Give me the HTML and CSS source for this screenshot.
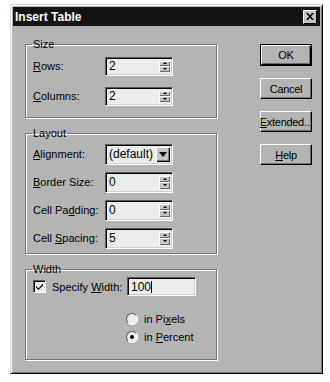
FILE: index.html
```html
<!DOCTYPE html>
<html lang="en">
<head>
  <meta charset="UTF-8">
  <title>Insert Table</title>
  <link rel="stylesheet" href="styles.css">
</head>
<body>

  <div class="window">
    <div class="titlebar">
      <span class="title">Insert Table</span>
      <span class="close">
        <svg width="8" height="7" viewBox="0 0 8 7"><path d="M0 0h2l2 2.5L6 0h2L5 3.5 8 7H6L4 4.5 2 7H0l3-3.5z" fill="#000"/></svg>
      </span>
    </div>

    <div class="body">
      <div class="groups">
        <fieldset class="group group-size">
          <legend>Size</legend>
          <div class="row">
            <label><u>R</u>ows:</label>
            <div class="field spin"><span class="value">2</span><span class="arrows"><i class="up"></i><i class="down"></i></span></div>
          </div>
          <div class="row">
            <label><u>C</u>olumns:</label>
            <div class="field spin"><span class="value">2</span><span class="arrows"><i class="up"></i><i class="down"></i></span></div>
          </div>
        </fieldset>

        <fieldset class="group group-layout">
          <legend>Layout</legend>
          <div class="row">
            <label><u>A</u>lignment:</label>
            <div class="field select"><span class="value">(default)</span><span class="drop"><i></i></span></div>
          </div>
          <div class="row">
            <label><u>B</u>order Size:</label>
            <div class="field spin"><span class="value">0</span><span class="arrows"><i class="up"></i><i class="down"></i></span></div>
          </div>
          <div class="row">
            <label>Cell Pa<u>d</u>ding:</label>
            <div class="field spin"><span class="value">0</span><span class="arrows"><i class="up"></i><i class="down"></i></span></div>
          </div>
          <div class="row">
            <label>Cell <u>S</u>pacing:</label>
            <div class="field spin"><span class="value">5</span><span class="arrows"><i class="up"></i><i class="down"></i></span></div>
          </div>
        </fieldset>

        <fieldset class="group group-width">
          <legend>Width</legend>
          <div class="check-row">
            <span class="checkbox">
              <svg width="9" height="9" viewBox="0 0 9 9"><path d="M1 4l2.5 2.5L8 1.5v2L3.5 8 1 5.5z" fill="#000"/></svg>
            </span>
            <span class="check-label">Specify <u>W</u>idth:</span>
            <div class="field text"><span class="value">100</span><span class="caret"></span></div>
          </div>
          <div class="radios">
            <div class="radio-row"><span class="radio"></span><span>in Pi<u>x</u>els</span></div>
            <div class="radio-row"><span class="radio checked"></span><span>in <u>P</u>ercent</span></div>
          </div>
        </fieldset>
      </div>

      <div class="buttons">
        <div class="btn default"><span>OK</span></div>
        <div class="btn"><span>Cancel</span></div>
        <div class="btn"><span><u>E</u>xtended...</span></div>
        <div class="btn"><span><u>H</u>elp</span></div>
      </div>
    </div>
  </div>

</body>
</html>
```

FILE: styles.css
```css
body {
  margin: 0;
  background: #fff;
  font-family: "Liberation Sans", Arial, sans-serif;
  font-size: 11px;
  color: #000;
}
.window {
  margin: 4px 0 0 10px;
  width: 313px;
  height: 370px;
  box-sizing: border-box;
  background: #b4b4b4;
  border: 1px solid;
  border-color: #d8d8d8 #000 #000 #d8d8d8;
  box-shadow: inset 1px 1px #fff, inset -1px -1px #7a7a7a;
  padding: 2px;
}
.titlebar {
  height: 19px;
  background: #141414;
  display: flex;
  align-items: center;
  justify-content: space-between;
  padding: 0 3px 0 2px;
}
.title {
  color: #fff;
  font-weight: bold;
  font-size: 12px;
}
.close {
  width: 14px;
  height: 14px;
  box-sizing: border-box;
  background: #c4c4c4;
  border: 1px solid;
  border-color: #fff #000 #000 #fff;
  display: flex;
  align-items: center;
  justify-content: center;
}
.body {
  display: flex;
  justify-content: space-between;
  padding: 12px 8px 0 12px;
}
.groups {
  width: 192px;
}
.group {
  margin: 0 0 9px;
  padding: 0 0 0 7px;
  border: 1px solid #777;
  box-shadow: inset 1px 1px #fff, 1px 1px #fff;
}
.group legend {
  padding: 0 1px;
  margin-left: -1px;
  line-height: 13px;
}
.group-size {
  padding-bottom: 6px;
}
.group-size .row {
  height: 30px;
}
.group-layout {
  padding-bottom: 1px;
}
.group-layout .row {
  height: 28px;
}
.group-layout .field {
  height: 21px;
}
.row {
  display: flex;
  align-items: center;
}
.row label {
  width: 72px;
}
.field {
  width: 68px;
  height: 19px;
  box-sizing: border-box;
  background: #ececec;
  border: 1px solid;
  border-color: #5a5a5a #fff #fff #5a5a5a;
  box-shadow: inset 1px 1px #000, inset -1px -1px #cfcfcf;
  display: flex;
  align-items: center;
  padding: 2px;
}
.value {
  flex: 1;
  padding-left: 1px;
  font-size: 12px;
}
.arrows {
  display: flex;
  flex-direction: column;
  width: 11px;
  align-self: stretch;
  margin: 1px 0;
}
.arrows i {
  flex: 1;
  background: #c4c4c4;
  box-shadow: inset 1px 1px #fff, inset -1px -1px #6a6a6a;
  display: flex;
  align-items: center;
  justify-content: center;
}
.arrows i::after {
  content: "";
  border-left: 2px solid transparent;
  border-right: 2px solid transparent;
}
.arrows .up::after {
  border-bottom: 2px solid #000;
}
.arrows .down::after {
  border-top: 2px solid #000;
}
.select .drop {
  width: 14px;
  align-self: stretch;
  background: #c4c4c4;
  box-shadow: inset 1px 1px #fff, inset -1px -1px #000, inset -2px -2px #7a7a7a;
  display: flex;
  align-items: center;
  justify-content: center;
}
.select .drop i {
  border-left: 4px solid transparent;
  border-right: 4px solid transparent;
  border-top: 5px solid #000;
}
.check-row {
  display: flex;
  align-items: center;
  margin-top: 1px;
}
.checkbox {
  width: 13px;
  height: 13px;
  box-sizing: border-box;
  background: #ececec;
  border: 1px solid;
  border-color: #5a5a5a #fff #fff #5a5a5a;
  box-shadow: inset 1px 1px #000;
  display: flex;
  align-items: center;
  justify-content: center;
  margin-right: 6px;
}
.check-label {
  width: 75px;
}
.text {
  width: 69px;
  justify-content: flex-start;
}
.text .value {
  flex: none;
}
.caret {
  width: 1px;
  height: 12px;
  background: #000;
}
.radios {
  padding: 14px 0 13px 93px;
}
.radio-row {
  display: flex;
  align-items: center;
  height: 18px;
}
.radio {
  width: 12px;
  height: 12px;
  box-sizing: border-box;
  border-radius: 50%;
  background: #ececec;
  border: 1px solid;
  border-color: #5a5a5a #fff #fff #5a5a5a;
  margin-right: 6px;
  display: flex;
  align-items: center;
  justify-content: center;
}
.radio.checked::after {
  content: "";
  width: 4px;
  height: 4px;
  border-radius: 50%;
  background: #000;
}
.buttons {
  display: flex;
  flex-direction: column;
  gap: 12px;
  padding-top: 6px;
}
.btn {
  width: 52px;
  height: 21px;
  box-sizing: border-box;
  background: #b4b4b4;
  border: 1px solid;
  border-color: #fff #000 #000 #fff;
  box-shadow: inset -1px -1px #6f6f6f;
  display: flex;
  align-items: center;
  justify-content: center;
  font-size: 11px;
  letter-spacing: -0.3px;
}
.btn.default {
  outline: 1px solid #000;
  width: 50px;
  height: 20px;
  margin: 1px;
}
```
